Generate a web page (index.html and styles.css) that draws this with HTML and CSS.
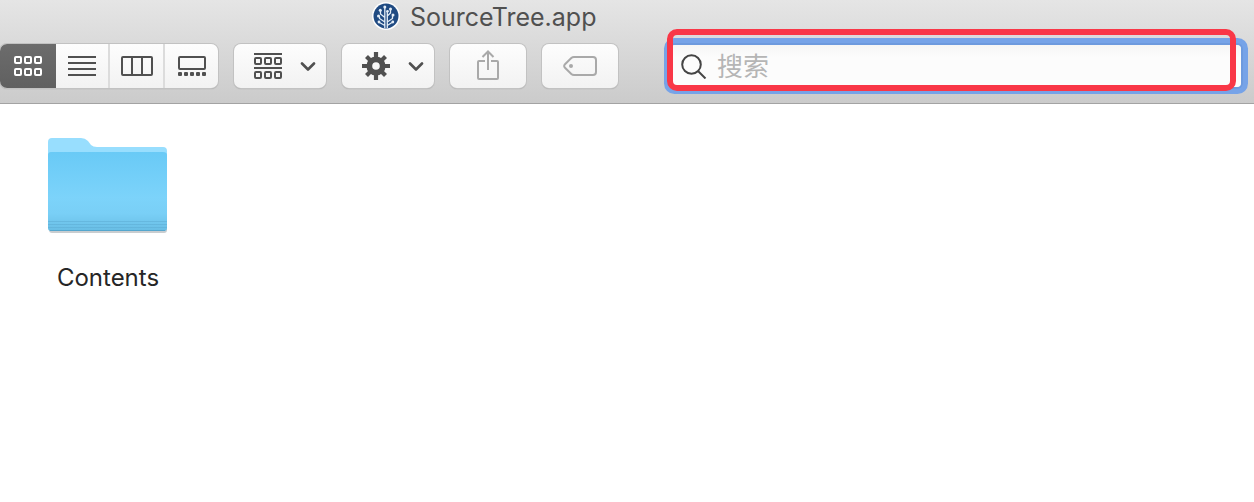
FILE: index.html
```html
<!DOCTYPE html>
<html lang="zh-CN">
<head>
<meta charset="utf-8">
<title>SourceTree.app</title>
<link rel="stylesheet" href="styles.css">
</head>
<body>
<header class="titlebar">
  <div class="title">
    <svg class="app-icon" width="28" height="28" viewBox="0 0 28 28" aria-hidden="true">
      <circle cx="14" cy="14" r="14" fill="#fdfdfd"/>
      <circle cx="14" cy="14" r="12.5" fill="#1f4a82"/>
      <g fill="none" stroke="#e4edf6" stroke-width="1.3">
        <path d="M12.8 26V5.500M12.800 20L7.500 16.500V14.500M12.800 15.500L8.500 12V8.500M15.300 26V20L20.500 16.500V14M15.300 20V14L18.500 11V7.500M15.300 14V9.500M12.800 23.500L7.500 20.500M15.300 23.500L20 20.500"/>
      </g>
      <g fill="#e4edf6"><circle cx="12.8" cy="5" r="1.500"/><circle cx="8.3" cy="8.3" r="1.500"/><circle cx="6.5" cy="14" r="1.500"/><circle cx="7" cy="20" r="1.400"/><circle cx="18.5" cy="7" r="1.500"/><circle cx="21" cy="13" r="1.500"/><circle cx="15.5" cy="9.300" r="1.300"/><circle cx="20.800" cy="20" r="1.400"/></g>
    </svg>
    <h1 class="title-text">SourceTree.app</h1>
  </div>
  <div class="toolbar">
    <div class="segments">
      <button class="segment selected" type="button" aria-label="Icons">
        <svg width="28" height="20" viewBox="0 0 28 20" fill="none" stroke="#fff" stroke-width="2"><rect x="1" y="1" width="6" height="6" rx="1"/><rect x="11" y="1" width="6" height="6" rx="1"/><rect x="21" y="1" width="6" height="6" rx="1"/><rect x="1" y="13" width="6" height="6" rx="1"/><rect x="11" y="13" width="6" height="6" rx="1"/><rect x="21" y="13" width="6" height="6" rx="1"/></svg>
      </button>
      <button class="segment" type="button" aria-label="List">
        <svg width="28" height="20" viewBox="0 0 28 20" fill="none" stroke="#505050" stroke-width="2"><path d="M0 1H28M0 7H28M0 13H28M0 19H28"/></svg>
      </button>
      <button class="segment" type="button" aria-label="Columns">
        <svg width="32" height="20" viewBox="0 0 32 20" fill="none" stroke="#505050" stroke-width="2"><rect x="1" y="1" width="30" height="18" rx="1"/><path d="M11 1V19M21 1V19"/></svg>
      </button>
      <button class="segment" type="button" aria-label="Gallery">
        <svg width="28" height="20" viewBox="0 0 28 20"><rect x="1" y="1" width="26" height="12" rx="1" fill="none" stroke="#505050" stroke-width="2"/><g fill="#505050"><rect y="16" width="4" height="4" rx="1"/><rect x="6" y="16" width="4" height="4" rx="1"/><rect x="12" y="16" width="4" height="4" rx="1"/><rect x="18" y="16" width="4" height="4" rx="1"/><rect x="24" y="16" width="4" height="4" rx="1"/></g></svg>
      </button>
    </div>
    <button class="tool menu" type="button" aria-label="Group">
      <svg width="28" height="26" viewBox="0 0 28 26" fill="none" stroke="#505050" stroke-width="2"><path d="M0 1H28M0 15H28"/><rect x="1" y="5" width="6" height="6" rx="1"/><rect x="11" y="5" width="6" height="6" rx="1"/><rect x="21" y="5" width="6" height="6" rx="1"/><rect x="1" y="19" width="6" height="6" rx="1"/><rect x="11" y="19" width="6" height="6" rx="1"/><rect x="21" y="19" width="6" height="6" rx="1"/></svg>
      <svg width="16" height="10" viewBox="0 0 16 10" fill="none" stroke="#505050" stroke-width="2.6" stroke-linecap="round" stroke-linejoin="round"><path d="M2 2.500L8 8.500L14 2.500"/></svg>
    </button>
    <button class="tool menu" type="button" aria-label="Action">
      <svg width="28" height="28" viewBox="-14 -14 28 28"><circle r="6.700" fill="none" stroke="#505050" stroke-width="5.800"/><g fill="none" stroke="#505050" stroke-width="4.200"><path d="M0 -14V-8M0 14V8M-14 0H-8M14 0H8"/><path d="M-9.500 -9.500L-6 -6M9.500 9.500L6 6M-9.500 9.500L-6 6M9.500 -9.500L6 -6"/></g></svg>
      <svg width="16" height="10" viewBox="0 0 16 10" fill="none" stroke="#505050" stroke-width="2.6" stroke-linecap="round" stroke-linejoin="round"><path d="M2 2.500L8 8.500L14 2.500"/></svg>
    </button>
    <button class="tool" type="button" aria-label="Share" disabled>
      <svg width="22" height="32" viewBox="0 0 22 32" fill="none" stroke="#a9a9a9" stroke-width="2"><path d="M8 11H2a1 1 0 0 0-1 1V28a1 1 0 0 0 1 1H20a1 1 0 0 0 1-1V12a1 1 0 0 0-1-1H14M11 20V1.500M5.500 7L11 1.500L16.500 7"/></svg>
    </button>
    <button class="tool" type="button" aria-label="Tags" disabled>
      <svg width="34" height="20" viewBox="0 0 34 20"><path d="M11 1H30a3 3 0 0 1 3 3V16a3 3 0 0 1-3 3H11Q9.500 19 8.300 18L2 11.700Q.3 10 2 8.300L8.300 2Q9.500 1 11 1Z" fill="none" stroke="#a9a9a9" stroke-width="2"/><circle cx="8" cy="10" r="2" fill="#a9a9a9"/></svg>
    </button>
    <label class="search">
      <svg width="26" height="26" viewBox="0 0 26 26" fill="none" stroke="#454545" stroke-width="2" aria-hidden="true"><circle cx="10.500" cy="11.500" r="9.300"/><path d="M17 18L24.500 25.500"/></svg>
      <input class="search-input" type="search" placeholder="搜索" aria-label="搜索">
      <span class="highlight"></span>
    </label>
  </div>
</header>
<main class="files">
  <a class="file" href="#contents">
    <svg width="120" height="98" viewBox="1 0 120 98" aria-hidden="true">
      <defs>
        <linearGradient id="front" x1="0" y1="0" x2="0" y2="1"><stop offset="0" stop-color="#69caf6"/><stop offset=".58" stop-color="#7cd3fa"/><stop offset=".78" stop-color="#79cff6"/><stop offset="1" stop-color="#68bde4"/></linearGradient>
      </defs>
      <rect x="2" y="80" width="118" height="16" rx="3" fill="#c9cdd0"/>
      <path d="M1 5Q1 1 5 1H34Q38 1 41 4L44 8Q46 10 50 10H116Q120 10 120 14V40H1Z" fill="#98defe"/>
      <path d="M1 18Q1 15 4 15H116Q120 15 120 18V91Q120 94 117 94H4Q1 94 1 91Z" fill="url(#front)"/>
      <path d="M1 84.500H120M1 87.500H120M1 90.500H120" stroke="#5fafd6" opacity=".6"/>
      <path d="M3 93.500H118" stroke="#55a6cd"/>
    </svg>
    <span class="file-name">Contents</span>
  </a>
</main>
</body>
</html>
```
FILE: styles.css
```css
* { box-sizing: border-box; }

body {
  margin: 0;
  background: #fff;
  font-family: Inter, "Noto Sans CJK SC", sans-serif;
}

.titlebar {
  padding-bottom: 15px;
  background: linear-gradient(#e5e5e5, #cbcbcb);
  border-bottom: 1px solid #a3a3a3;
}

.title {
  display: flex;
  align-items: center;
  gap: 10px;
  height: 34px;
  padding-left: 372px;
}

.app-icon { margin-bottom: 2px; }

.title-text {
  margin: 0;
  color: #505050;
  font-size: 25px;
  font-weight: 400;
  line-height: 34px;
}

.toolbar {
  display: flex;
  align-items: center;
  gap: 16px;
  margin-top: 10px;
  padding-right: 13px;
}

.segments,
.tool {
  display: flex;
  height: 44px;
  background: linear-gradient(#fdfdfd, #f2f2f2);
  border: 0;
  border-radius: 7px;
  box-shadow: 0 0 0 1px #c2c2c2, 0 1px 1px #999;
}

.segments {
  overflow: hidden;
  width: 218px;
}

.segment {
  display: flex;
  flex: 1;
  align-items: center;
  justify-content: center;
  padding: 0;
  background: none;
  border: 0;
  border-left: 2px solid #dcdcdc;
}

.segment.selected {
  flex: 0 0 56px;
  background: linear-gradient(#6c6c6c, #606060);
  border: 0;
}

.segment.selected + .segment {
  flex: 0 0 52px;
  border-left: 0;
}

.tool {
  flex: none;
  align-items: center;
  justify-content: center;
  width: 76px;
  padding: 0;
}

.tool.menu {
  justify-content: space-between;
  width: 92px;
  padding: 0 10px 0 20px;
}

.search {
  position: relative;
  display: flex;
  flex: 1;
  align-items: center;
  gap: 10px;
  height: 42px;
  margin-left: 37px;
  padding-left: 10px;
  background: linear-gradient(#f6f6f6, #fcfcfc 30%, #fcfcfc);
  border-radius: 4px;
  box-shadow: 0 0 0 2px #6d9ade, 0 0 0 7px #76a3e8;
}

.search-input {
  flex: 1;
  min-width: 0;
  padding: 2px 0 0;
  color: #333;
  background: none;
  border: 0;
  outline: 0;
  font: 26px/36px Inter, "Noto Sans CJK SC", sans-serif;
}

.search-input::placeholder { color: #b5b5b5; }

.highlight {
  position: absolute;
  inset: -16px 5px -4px -4px;
  border: 6px solid #f93747;
  border-radius: 10px;
  pointer-events: none;
}

.files {
  display: flex;
  padding: 33px 48px;
}

.file {
  display: flex;
  flex-direction: column;
  align-items: center;
  gap: 27px;
  color: #262626;
  text-decoration: none;
}

.file-name {
  font-size: 24px;
  line-height: 32px;
}
```
